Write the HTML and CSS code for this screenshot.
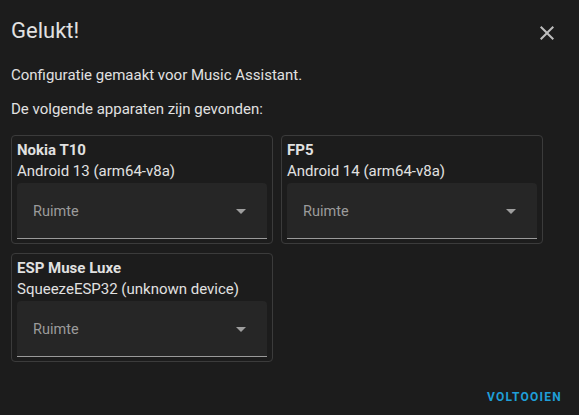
FILE: index.html
```html
<!DOCTYPE html>
<html lang="nl">
<head>
    <meta charset="UTF-8">
    <title>Gelukt!</title>
    <link rel="stylesheet" href="styles.css">
</head>
<body>
    <div class="dialog">
        <header class="dialog-header">
            <h2>Gelukt!</h2>
            <button class="close" aria-label="Sluiten">
                <svg viewBox="0 0 24 24" width="24" height="24"><path d="M19 6.41 17.59 5 12 10.59 6.41 5 5 6.41 10.59 12 5 17.59 6.41 19 12 13.41 17.59 19 19 17.59 13.41 12z"/></svg>
            </button>
        </header>
        <p class="msg">Configuratie gemaakt voor Music Assistant.</p>
        <p class="msg">De volgende apparaten zijn gevonden:</p>

        <div class="devices">
            <div class="device">
                <b>Nokia T10</b>
                <span>Android 13 (arm64-v8a)</span>
                <div class="select"><span>Ruimte</span><i class="arrow"></i></div>
            </div>
            <div class="device">
                <b>FP5</b>
                <span>Android 14 (arm64-v8a)</span>
                <div class="select"><span>Ruimte</span><i class="arrow"></i></div>
            </div>
            <div class="device">
                <b>ESP Muse Luxe</b>
                <span>SqueezeESP32 (unknown device)</span>
                <div class="select"><span>Ruimte</span><i class="arrow"></i></div>
            </div>
        </div>

        <footer class="actions">
            <button class="done">Voltooien</button>
        </footer>
    </div>
</body>
</html>
```

FILE: styles.css
```css
* {
    margin: 0;
    padding: 0;
    box-sizing: border-box;
}

body {
    font-family: Roboto, 'Noto Sans', sans-serif;
    background-color: #1c1c1c;
    color: #e1e1e1;
    font-size: 15px;
    line-height: 21px;
}

.dialog {
    padding: 14px 0 0 11px;
    width: 579px;
}

.dialog-header {
    display: flex;
    justify-content: space-between;
    align-items: center;
    padding-right: 20px;
    height: 34px;
}

.dialog-header h2 {
    font-size: 22px;
    font-weight: 400;
    line-height: 34px;
}

.close {
    background: none;
    border: none;
    width: 24px;
    height: 24px;
    margin-top: 4px;
    fill: #bdbdbd;
}

.msg {
    margin-top: 17px;
}

.msg + .msg {
    margin-top: 13px;
}

.devices {
    display: grid;
    grid-template-columns: 262px 262px;
    gap: 9px 8px;
    margin-top: 15px;
}

.device {
    display: flex;
    flex-direction: column;
    border: 1px solid #3b3b3b;
    border-radius: 4px;
    padding: 4px 5px 4px;
}

.device b {
    font-weight: 700;
}

.select {
    margin-top: 1px;
    height: 56px;
    display: flex;
    align-items: center;
    justify-content: space-between;
    padding: 1px 21px 0 16px;
    background-color: #262626;
    border-radius: 4px 4px 0 0;
    border-bottom: 1px solid #9a9a9a;
    color: #9b9b9b;
    font-size: 14.5px;
}

.arrow {
    width: 0;
    height: 0;
    border-left: 5px solid transparent;
    border-right: 5px solid transparent;
    border-top: 5px solid #9e9e9e;
}

.actions {
    display: flex;
    justify-content: flex-end;
    padding: 28px 17px 0 0;
}

.done {
    background: none;
    border: none;
    font-family: Roboto, sans-serif;
    font-size: 12px;
    font-weight: 700;
    letter-spacing: 1.25px;
    text-transform: uppercase;
    color: #1f9ed8;
}
```
